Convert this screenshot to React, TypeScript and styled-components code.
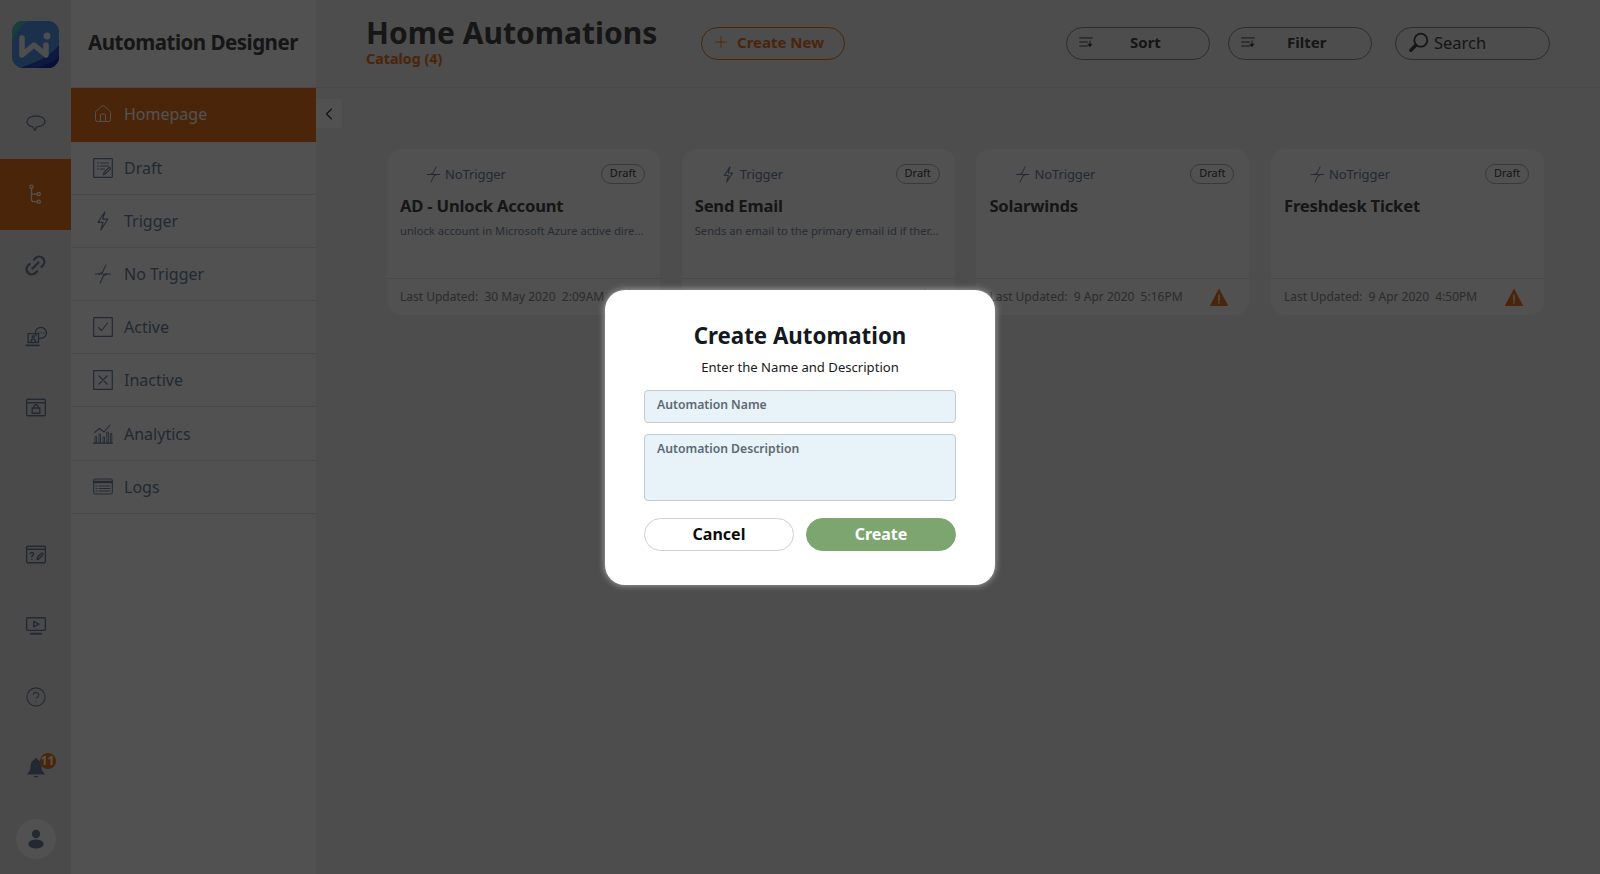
import React from "react";
import styled, { createGlobalStyle } from "styled-components";
import { ChevronLeft, CircleHelp, House, Link2, Plus } from "lucide-react";

const GlobalStyle = createGlobalStyle`
  html, body {
    margin: 0;
    padding: 0;
    height: 100%;
    overflow: hidden;
    font-family: "Noto Sans", "Open Sans", sans-serif;
  }
  * { box-sizing: border-box; }
`;

const NAVY = "#6e80a0";
const INK = "#454545";
const ORANGE = "#e6741c";

const Page = styled.div`
  position: relative;
  display: grid;
  grid-template-columns: 71px 245px 1fr;
  width: 1600px;
  height: 874px;
  background: #eeeeee;
  overflow: hidden;
`;

const Rail = styled.aside`
  display: flex;
  flex-direction: column;
  height: 874px;
  background: #e6e6e6;
`;

const LogoBox = styled.div`
  display: flex;
  align-items: center;
  justify-content: center;
  height: 88px;
  flex-shrink: 0;
`;

const RailItem = styled.div<{ $active?: boolean }>`
  display: flex;
  align-items: center;
  justify-content: center;
  height: 71px;
  flex-shrink: 0;
  color: ${(p) => (p.$active ? "#ffffff" : NAVY)};
  background: ${(p) => (p.$active ? ORANGE : "transparent")};
`;

const RailSpacer = styled.div`
  flex: 1;
`;

const BellWrap = styled.div`
  position: relative;
  display: flex;
`;

const Badge = styled.span`
  position: absolute;
  top: -4px;
  right: -9px;
  display: flex;
  align-items: center;
  justify-content: center;
  width: 16px;
  height: 16px;
  border-radius: 50%;
  background: ${ORANGE};
  color: #fff;
  font-size: 12px;
  font-weight: 700;
  line-height: 1;
`;

const Avatar = styled.div`
  display: flex;
  align-items: center;
  justify-content: center;
  width: 40px;
  height: 40px;
  border-radius: 50%;
  background: #fbfbfb;
  color: ${NAVY};
`;

const Sidebar = styled.nav`
  display: flex;
  flex-direction: column;
  background: #fcfcfc;
`;

const SideHeader = styled.div`
  display: flex;
  align-items: center;
  height: 88px;
  padding-left: 17px;
  padding-bottom: 3px;
  border-bottom: 1px solid #e3e3e3;
  font-size: 20.5px;
  font-weight: 700;
  letter-spacing: -0.5px;
  white-space: nowrap;
  color: ${INK};
`;

const NavItem = styled.div<{ $active?: boolean }>`
  display: flex;
  align-items: center;
  gap: 11px;
  height: ${(p) => (p.$active ? "53.5px" : "53.2px")};
  padding-left: 22px;
  font-size: 16px;
  color: ${(p) => (p.$active ? "#ffffff" : NAVY)};
  background: ${(p) => (p.$active ? ORANGE : "transparent")};
  border-bottom: 1px solid ${(p) => (p.$active ? ORANGE : "#e0e0e0")};
`;

const NavIcon = styled.span`
  display: flex;
  justify-content: center;
  width: 20px;
`;

const Main = styled.main`
  position: relative;
  display: flex;
  flex-direction: column;
`;

const Header = styled.header`
  display: flex;
  align-items: center;
  height: 88px;
  padding: 0 50px;
  border-bottom: 1px solid #e3e3e3;
`;

const TitleBlock = styled.div`
  width: 335px;
  margin-top: -4px;
`;

const PageTitle = styled.h1`
  margin: 0;
  font-size: 30px;
  font-weight: 700;
  line-height: 34px;
  color: ${INK};
`;

const Catalog = styled.div`
  font-size: 14.3px;
  font-weight: 700;
  line-height: 18px;
  color: ${ORANGE};
`;

const PillButton = styled.div<{ $accent?: boolean }>`
  display: flex;
  align-items: center;
  width: 144px;
  height: 33px;
  padding: 0 0 3px 10px;
  border: 1px solid ${(p) => (p.$accent ? ORANGE : "#8a8a8a")};
  border-radius: 17px;
  font-size: 15px;
  font-weight: 700;
  color: ${(p) => (p.$accent ? ORANGE : INK)};
`;

const PillLabel = styled.span<{ $indent: number }>`
  margin-left: ${(p) => p.$indent}px;
`;

const Tools = styled.div`
  display: flex;
  align-items: center;
  margin-left: auto;
  gap: 18px;
`;

const SearchBox = styled.div`
  display: flex;
  align-items: center;
  gap: 5px;
  width: 155px;
  height: 33px;
  margin-left: 5px;
  padding: 0 0 3px 12px;
  border: 1px solid #8a8a8a;
  border-radius: 17px;
  font-size: 16.5px;
  color: ${INK};
`;

const CollapseTab = styled.div`
  position: absolute;
  top: 99px;
  left: 0;
  display: flex;
  align-items: center;
  justify-content: center;
  width: 26px;
  height: 29px;
  background: #fbfbfb;
  color: #333;
`;

const CardGrid = styled.section`
  display: grid;
  grid-template-columns: repeat(4, 273px);
  gap: 21.7px;
  padding: 61px 0 0 71px;
`;

const Card = styled.article`
  display: flex;
  flex-direction: column;
  height: 166px;
  border-radius: 14px;
  background: #fafafa;
`;

const CardTop = styled.div`
  display: flex;
  align-items: center;
  justify-content: space-between;
  padding: 15px 15px 0 38px;
  height: 35px;
`;

const TriggerType = styled.span`
  display: flex;
  align-items: center;
  gap: 3px;
  font-size: 13px;
  letter-spacing: -0.1px;
  color: ${NAVY};
`;

const DraftTag = styled.span`
  display: flex;
  align-items: center;
  justify-content: center;
  width: 44px;
  height: 20px;
  border: 1px solid #b0b0b0;
  border-radius: 10px;
  font-size: 11px;
  line-height: 1;
  padding-bottom: 3px;
  color: ${INK};
`;

const CardTitle = styled.h3`
  margin: 10px 0 0;
  padding: 0 13px;
  font-size: 16.6px;
  font-weight: 700;
  line-height: 24px;
  letter-spacing: -0.2px;
  color: ${INK};
`;

const CardDesc = styled.p`
  flex: 1;
  margin: 5px 0 0;
  padding: 0 13px;
  font-size: 11.2px;
  line-height: 16px;
  white-space: nowrap;
  color: #7d8ba0;
`;

const CardFooter = styled.footer`
  display: flex;
  align-items: center;
  justify-content: space-between;
  height: 37px;
  padding: 0 21px 2px 13px;
  border-top: 1px solid #e2e2e2;
  font-size: 12px;
  color: #8a8a8a;
`;

const WarningMark = styled.svg`
  width: 18px;
  height: 17px;
  margin-top: 3px;
`;

const Overlay = styled.div`
  position: absolute;
  inset: 0;
  display: flex;
  align-items: center;
  justify-content: center;
  background: rgba(0, 0, 0, 0.68);
`;

const Modal = styled.div`
  display: flex;
  flex-direction: column;
  align-items: center;
  width: 390px;
  height: 295px;
  padding: 29px 39px 0;
  border-radius: 20px;
  background: #fff;
  box-shadow: 0 0 7px rgba(255, 255, 255, 0.55);
`;

const ModalTitle = styled.h2`
  margin: 0;
  font-size: 22.3px;
  font-weight: 700;
  line-height: 34px;
  color: #15181c;
`;

const ModalHint = styled.p`
  margin: 4px 0 0;
  font-size: 13.1px;
  line-height: 20px;
  color: #1a1a1a;
`;

const Field = styled.div<{ $tall?: boolean }>`
  width: 100%;
  height: ${(p) => (p.$tall ? "67px" : "33px")};
  margin-top: ${(p) => (p.$tall ? "11px" : "13px")};
  padding: 5.5px 12px 0;
  border: 1px solid #c6cbd0;
  border-radius: 4px;
  background: #e7f2f9;
  font-size: 12.2px;
  font-weight: 600;
  line-height: 18px;
  color: #5d6974;
`;

const ModalActions = styled.div`
  display: grid;
  grid-template-columns: 150px 150px;
  gap: 12px;
  width: 100%;
  margin-top: 17px;
`;

const ActionButton = styled.div<{ $primary?: boolean }>`
  display: flex;
  align-items: center;
  justify-content: center;
  height: 33px;
  border: 1px solid ${(p) => (p.$primary ? "#7ca56f" : "#cfcfcf")};
  border-radius: 17px;
  background: ${(p) => (p.$primary ? "#7ca56f" : "#fff")};
  font-size: 16px;
  font-weight: 700;
  color: ${(p) => (p.$primary ? "#fff" : "#0c0c0c")};
`;

type GlyphProps = { size?: number; children: React.ReactNode; fill?: string; sw?: number };

const Glyph = ({ size = 20, children, fill = "none", sw = 1.2 }: GlyphProps) => (
  <svg width={size} height={size} viewBox="0 0 20 20" fill={fill} stroke={fill === "none" ? "currentColor" : "none"} strokeWidth={sw} strokeLinecap="round" strokeLinejoin="round">
    {children}
  </svg>
);

const Logo = () => (
  <svg width="47" height="47" viewBox="0 0 47 47">
    <defs>
      <clipPath id="logo-clip">
        <rect width="47" height="47" rx="11" />
      </clipPath>
    </defs>
    <g clipPath="url(#logo-clip)">
      <rect width="47" height="47" fill="#5296e8" />
      <path d="M0 0h15C10 4 4 10 0 20z" fill="#4fc4b4" />
      <path d="M47 24C38 36 22 42 8 47h39z" fill="#2a50c0" />
      <path d="M47 36c-6 5-14 8-22 11h22z" fill="#1c2fa8" />
      <path d="M10 17v17l12-10 12 10V24" fill="none" stroke="#f2f2f2" strokeWidth="5.5" strokeLinejoin="round" strokeLinecap="round" />
      <circle cx="35" cy="15" r="3.4" fill="#f2f2f2" />
    </g>
  </svg>
);

const BubbleIcon = () => (
  <svg width="20" height="17" viewBox="0 0 20 17" fill="none" stroke="currentColor" strokeWidth="1.3" strokeLinejoin="round">
    <path d="M10 1C5 1 1 3.3 1 6.5c0 2.6 2.4 4.7 5.800 5.300.5 1 1.200 2.300 2.200 3.700.5-1.400 1-2.600 1.600-3.600C15.300 11.800 19 9.500 19 6.500 19 3.300 15 1 10 1z" />
  </svg>
);

const TreeIcon = () => (
  <Glyph size={23} sw={1.1}>
    <circle cx="6.5" cy="3.2" r="1.4" />
    <circle cx="12.8" cy="9.6" r="1.4" />
    <circle cx="12.8" cy="16.2" r="1.4" />
    <path d="M6.5 4.700v9.700c0 1.200.6 1.800 1.800 1.800h3.100M6.500 9.600h4.900" />
  </Glyph>
);

const AgentIcon = () => (
  <Glyph size={22}>
    <rect x="2.8" y="7" width="9.500" height="8" />
    <path d="M1 17.600h11.800" strokeWidth="1.5" />
    <circle cx="7.500" cy="9.800" r="1" />
    <path d="M5.400 14c0-1.400 1-2 2.100-2s2.100.6 2.100 2" />
    <path d="M10 8.500a5 5 0 1 1 4.500 2.700l-1.500.1" />
    <path d="M12.500 6.200h.1M14.800 6.200h.1M17 6.200h.1" />
  </Glyph>
);

const LockWindowIcon = () => (
  <Glyph size={22} sw={1.3}>
    <rect x="1.500" y="2" width="17" height="15" rx="1" />
    <path d="M1.500 5.200h17" />
    <rect x="6.500" y="10" width="7" height="4.800" />
    <path d="M8.200 10V8.800c0-1.100.8-1.700 1.800-1.700s1.800.6 1.800 1.700V10" />
  </Glyph>
);

const NoteWindowIcon = () => (
  <Glyph size={22} sw={1.3}>
    <rect x="1.500" y="2" width="17" height="15" rx="1" />
    <path d="M1.500 4.800h17" />
    <path d="M4.600 9c0-1.600 3.200-1.600 3.200 0 0 1.300-1.600 1.300-1.600 2.800M6.200 14h.1" />
    <path d="M11 14.200l.5-2.200 3.200-3.400c.9-.8 2.200.3 1.400 1.300l-3.200 3.500z" />
  </Glyph>
);

const PlayScreenIcon = () => (
  <Glyph size={22} sw={1.3}>
    <rect x="1.500" y="2.500" width="17" height="11.500" rx="1" />
    <path d="M8 5.800v5l4.600-2.500z" />
    <path d="M5.500 17h9" strokeWidth="1.8" />
  </Glyph>
);

const BellIcon = () => (
  <Glyph size={22} fill="currentColor">
    <path d="M10 .8c.9 0 1.300.6 1.300 1.500 2.800.8 3.600 3.400 3.700 6.200.1 2.800.9 5 2.800 6.600v.9H2.200v-.9C4.100 13.500 4.900 11.300 5 8.500 5.100 5.700 5.900 3.100 8.700 2.300 8.700 1.400 9.100.8 10 .8z" />
    <rect x="8" y="17.200" width="4" height="1.300" rx=".6" />
  </Glyph>
);

const PersonIcon = () => (
  <Glyph size={20} fill="currentColor">
    <circle cx="10" cy="5" r="4.200" />
    <ellipse cx="10" cy="15" rx="7.700" ry="4.600" />
  </Glyph>
);

const DraftIcon = () => (
  <Glyph size={20}>
    <rect x=".7" y=".7" width="18.600" height="18.600" rx=".5" />
    <path d="M4.500 5h1M7.500 5h8M4.500 8h1M7.500 8h8M4.500 11h1M7.500 11h4" />
    <path d="M10.500 16.800l.6-2.500 4.600-4.600c.9-.8 2.200.4 1.400 1.400l-4.600 4.600z" />
  </Glyph>
);

const BoltIcon = ({ size = 20 }: { size?: number }) => (
  <Glyph size={size}>
    <path d="M11.800 1L5 11.300h5L7.800 19l7-10.800h-5z" />
  </Glyph>
);

const SlashBoltIcon = ({ size = 20 }: { size?: number }) => (
  <Glyph size={size}>
    <path d="M13 1L9.500 8.300M10.500 11.700L7 19M2.500 10h15" strokeWidth="1.1" />
    <path d="M9.500 8.300L6 10M10.500 11.700L14 10" strokeWidth="1.1" />
  </Glyph>
);

const CheckBoxIcon = () => (
  <Glyph size={20}>
    <rect x=".7" y=".7" width="18.600" height="18.600" />
    <path d="M5.500 10.500l3 3 6-7.500" />
  </Glyph>
);

const CrossBoxIcon = () => (
  <Glyph size={20}>
    <rect x=".7" y=".7" width="18.600" height="18.600" />
    <path d="M6 6l8 8M14 6l-8 8" />
  </Glyph>
);

const ChartIcon = () => (
  <Glyph size={20} sw={0.9}>
    <path d="M.5 19.200h19" strokeWidth="1.3" />
    <path d="M2 18.500v-6h1.500v6zM6 18.500V10h1.500v8.500zM10 18.500v-5.500h1.500v5.500zM13.800 18.500V8h1.500v10.500zM17.300 18.500v-9h1.500v9z" />
    <path d="M1.500 8.500L6.500 4.500l4.500 3.500L17 1" strokeWidth="1.1" />
  </Glyph>
);

const LogsIcon = () => (
  <Glyph size={20} sw={1.1}>
    <rect x=".7" y="2" width="18.600" height="15" rx="1.500" />
    <path d="M.7 5h18.600" strokeWidth="2.6" />
    <path d="M3 9h1M6 9h11M3 11.500h1M6 11.500h11M3 14h1M6 14h11" />
  </Glyph>
);

const SortIcon = () => (
  <Glyph size={18} sw={1.1}>
    <path d="M3 5.500h14M3 10h8.500M3 14.500h8.500" />
    <path d="M14.500 9v5" />
    <path d="M12.500 12.500h4l-2 2.500z" fill="currentColor" />
  </Glyph>
);

const LensIcon = () => (
  <svg width="21" height="21" viewBox="0 0 21 21" fill="none" stroke="currentColor" strokeLinecap="round">
    <circle cx="12.800" cy="8.200" r="6.500" strokeWidth="1.8" />
    <path d="M7.800 13.200L2.800 18.200" strokeWidth="3.4" />
  </svg>
);

const WarningIcon = () => (
  <WarningMark viewBox="0 0 18 17">
    <path d="M9 .5L17.500 16.500H.5z" fill={ORANGE} stroke={ORANGE} strokeLinejoin="round" />
    <path d="M9 6v5.500M9 13.400v.6" stroke="#f5f5f5" strokeWidth="1.6" strokeLinecap="round" />
  </WarningMark>
);

const navItems = [
  { label: "Homepage", icon: <House size={22} strokeWidth={1.2} />, active: true },
  { label: "Draft", icon: <DraftIcon /> },
  { label: "Trigger", icon: <BoltIcon /> },
  { label: "No Trigger", icon: <SlashBoltIcon /> },
  { label: "Active", icon: <CheckBoxIcon /> },
  { label: "Inactive", icon: <CrossBoxIcon /> },
  { label: "Analytics", icon: <ChartIcon /> },
  { label: "Logs", icon: <LogsIcon /> },
];

const cards = [
  { type: "NoTrigger", title: "AD - Unlock Account", desc: "unlock account in Microsoft Azure active dire...", updated: "30 May 2020\u00a0\u00a02:09AM" },
  { type: "Trigger", title: "Send Email", desc: "Sends an email to the primary email id if ther...", updated: "30 May 2020\u00a0\u00a02:09AM" },
  { type: "NoTrigger", title: "Solarwinds", desc: "", updated: "9 Apr 2020\u00a0\u00a05:16PM" },
  { type: "NoTrigger", title: "Freshdesk Ticket", desc: "", updated: "9 Apr 2020\u00a0\u00a04:50PM" },
];

export default function App() {
  return (
    <>
      <GlobalStyle />
      <Page>
        <Rail>
          <LogoBox>
            <Logo />
          </LogoBox>
          <RailItem>
            <BubbleIcon />
          </RailItem>
          <RailItem $active>
            <TreeIcon />
          </RailItem>
          <RailItem>
            <Link2 size={25} strokeWidth={2.2} style={{ transform: "rotate(-45deg)" }} />
          </RailItem>
          <RailItem>
            <AgentIcon />
          </RailItem>
          <RailItem>
            <LockWindowIcon />
          </RailItem>
          <RailSpacer />
          <RailItem>
            <NoteWindowIcon />
          </RailItem>
          <RailItem>
            <PlayScreenIcon />
          </RailItem>
          <RailItem>
            <CircleHelp size={22} strokeWidth={1.2} />
          </RailItem>
          <RailItem>
            <BellWrap>
              <BellIcon />
              <Badge>11</Badge>
            </BellWrap>
          </RailItem>
          <RailItem>
            <Avatar>
              <PersonIcon />
            </Avatar>
          </RailItem>
        </Rail>

        <Sidebar>
          <SideHeader>Automation Designer</SideHeader>
          {navItems.map((item) => (
            <NavItem key={item.label} $active={item.active}>
              <NavIcon>{item.icon}</NavIcon>
              {item.label}
            </NavItem>
          ))}
        </Sidebar>

        <Main>
          <Header>
            <TitleBlock>
              <PageTitle>Home Automations</PageTitle>
              <Catalog>Catalog (4)</Catalog>
            </TitleBlock>
            <PillButton $accent>
              <Plus size={18} strokeWidth={1.2} />
              <PillLabel $indent={7}>Create New</PillLabel>
            </PillButton>
            <Tools>
              <PillButton>
                <SortIcon />
                <PillLabel $indent={35}>Sort</PillLabel>
              </PillButton>
              <PillButton>
                <SortIcon />
                <PillLabel $indent={30}>Filter</PillLabel>
              </PillButton>
              <SearchBox>
                <LensIcon />
                Search
              </SearchBox>
            </Tools>
          </Header>
          <CollapseTab>
            <ChevronLeft size={20} strokeWidth={1.3} />
          </CollapseTab>
          <CardGrid>
            {cards.map((card) => (
              <Card key={card.title}>
                <CardTop>
                  <TriggerType>
                    {card.type === "Trigger" ? <BoltIcon size={17} /> : <SlashBoltIcon size={17} />}
                    {card.type}
                  </TriggerType>
                  <DraftTag>Draft</DraftTag>
                </CardTop>
                <CardTitle>{card.title}</CardTitle>
                <CardDesc>{card.desc}</CardDesc>
                <CardFooter>
                  <span>Last Updated:&nbsp;&nbsp;{card.updated}</span>
                  <WarningIcon />
                </CardFooter>
              </Card>
            ))}
          </CardGrid>
        </Main>

        <Overlay>
          <Modal>
            <ModalTitle>Create Automation</ModalTitle>
            <ModalHint>Enter the Name and Description</ModalHint>
            <Field>Automation Name</Field>
            <Field $tall>Automation Description</Field>
            <ModalActions>
              <ActionButton>Cancel</ActionButton>
              <ActionButton $primary>Create</ActionButton>
            </ModalActions>
          </Modal>
        </Overlay>
      </Page>
    </>
  );
}
